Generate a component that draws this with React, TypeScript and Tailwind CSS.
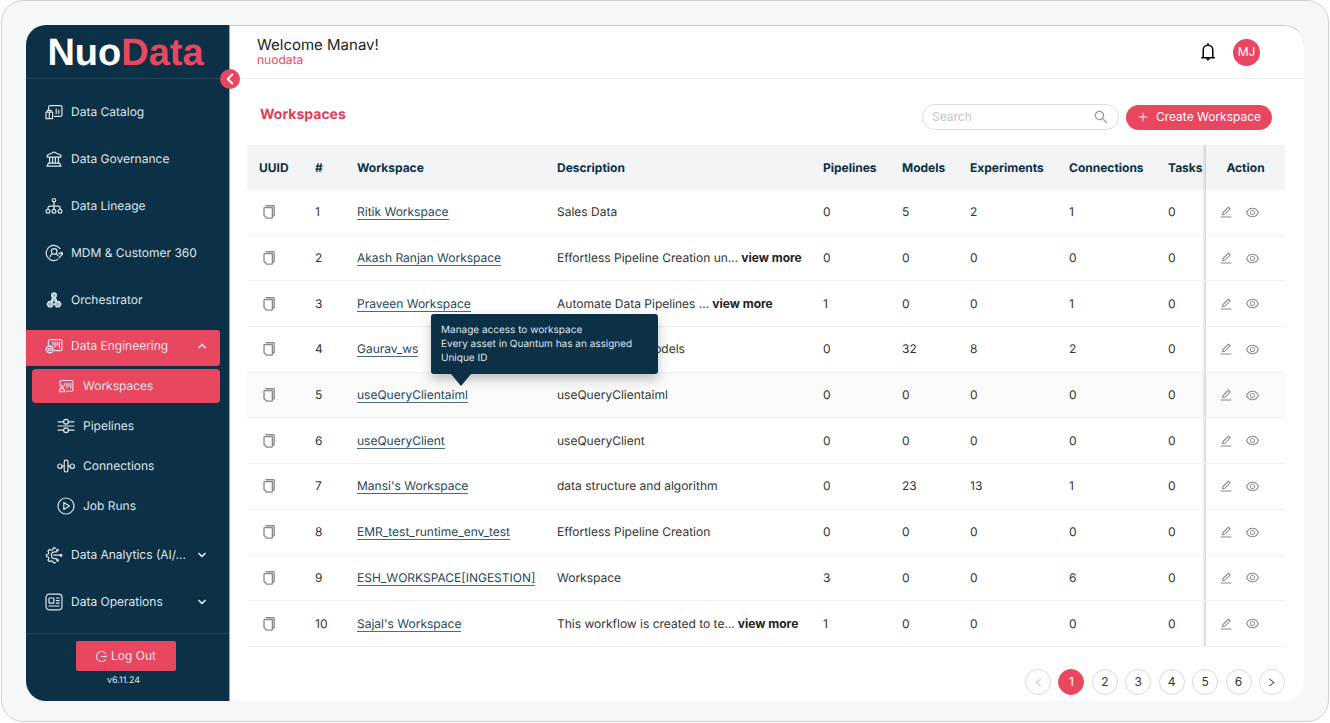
import React, { useState } from 'react';
import {
  AiOutlineEdit,
  AiOutlineEye,
  AiOutlineLeft,
  AiOutlineLogout,
  AiOutlinePlus,
  AiOutlineRight,
  AiOutlineSearch,
} from 'react-icons/ai';
import { ChevronDown, ChevronLeft, ChevronUp } from 'lucide-react';

type IconProps = { className?: string; strokeWidth?: number };

const Svg = ({
  children,
  className = 'size-[18px]',
  strokeWidth = 1.2,
}: IconProps & { children: React.ReactNode }) => (
  <svg
    viewBox="0 0 18 18"
    className={`${className} shrink-0`}
    fill="none"
    stroke="currentColor"
    strokeWidth={strokeWidth}
    strokeLinecap="round"
    strokeLinejoin="round"
    aria-hidden="true"
  >
    {children}
  </svg>
);

const CatalogIcon = () => (
  <Svg>
    <path d="M3.6 6.5V4.2a1.6 1.6 0 0 1 1.6-1.6h10.2A1.6 1.6 0 0 1 17 4.2v7.6a1.6 1.6 0 0 1-1.6 1.6H9.6" />
    <path d="M1 9.2h6.6v6.4H1zM4.3 9.2v6.4M2.4 9V7.4h3.8V9M11.2 6v4.6M13.8 7.2v3.4" />
  </Svg>
);

const GovernanceIcon = () => (
  <Svg>
    <path d="M2.2 5.2 9 2l6.800 3.200v2H2.200zM4.600 7.400v5.600M7.600 7.400v5.600M10.400 7.400v5.600M13.400 7.400v5.600" />
    <path d="M3.400 13.200h11.200l1.400 3H2z" />
  </Svg>
);

const LineageIcon = () => (
  <Svg>
    <circle cx="9" cy="3.2" r="1.7" />
    <circle cx="3" cy="14.2" r="1.9" />
    <circle cx="9" cy="14.2" r="1.9" />
    <circle cx="15" cy="14.2" r="1.9" />
    <path d="M9 5v7.2M3 12.2v-1.4A1.600 1.600 0 0 1 4.600 9.200h8.800A1.600 1.600 0 0 1 15 10.800v1.400" />
  </Svg>
);

const CustomerIcon = () => (
  <Svg>
    <path d="M15 4.600A7.600 7.600 0 1 0 12.600 15.600M17 9.200a7.600 7.600 0 0 1-3 4.600M14 9.600l3-1.200 1 2.600" />
    <circle cx="9.200" cy="7.400" r="2.800" />
    <path d="M5 13c.2-1.600 1.200-2.600 2.600-3.200M11 9.600l2.200 2" />
  </Svg>
);

const OrchestratorIcon = () => (
  <Svg>
    <g fill="currentColor" fillOpacity="0.75">
      <circle cx="9" cy="4.200" r="2.400" />
      <path d="M6.200 9.800 7.600 7h2.800l1.400 2.800zM2 13.200l1.600-2.600h3.200l1.600 2.600-1.600 2.600H3.600zM9.600 13.200l1.600-2.600h3.200l1.600 2.600-1.600 2.600h-3.200z" />
    </g>
  </Svg>
);

const EngineeringIcon = () => (
  <Svg>
    <path d="M3.400 8V4.200A1.600 1.600 0 0 1 5 2.600h10.400A1.600 1.600 0 0 1 17 4.200v7.800a1.600 1.600 0 0 1-1.600 1.600H9.400" />
    <path d="M7.800 5.200v2.200M10 5.200v4.600M12.200 5.200v3.200M14.400 5.200v5.600" />
    <circle cx="4.800" cy="12.400" r="3.200" />
    <circle cx="4.800" cy="12.400" r="1.200" />
    <path d="M4.800 8.400v.6M4.800 15.800v.6M.8 12.400h.6M8.200 12.400h.6M2 9.600l.4.4M7.200 14.800l.4.4M2 15.200l.4-.4M7.200 10l.4-.4" />
  </Svg>
);

const WorkspacesIcon = () => (
  <Svg className="size-4">
    <path d="M2.200 8V4.200a1.400 1.400 0 0 1 1.400-1.400h11.800a1.400 1.400 0 0 1 1.400 1.400v9.400a1.400 1.400 0 0 1-1.400 1.400H9.600" />
    <path d="M7.600 6v2.400M10 6v5M12.200 6v3.400M14.400 6v5.600" />
    <circle cx="4.400" cy="9.800" r="1.500" />
    <path d="M1.400 15.400c0-2.400 1.200-3.600 3-3.600s3 1.200 3 3.600z" />
  </Svg>
);

const PipelinesIcon = () => (
  <Svg>
    <path d="M1 4.800h5.600M11.400 4.800H17M1 9h16M1 13.200h5.600M11.400 13.200H17" />
    <circle cx="9" cy="4.800" r="2.400" />
    <circle cx="9" cy="13.200" r="2.400" />
  </Svg>
);

const ConnectionsIcon = () => (
  <Svg>
    <rect x="0.800" y="7" width="4.200" height="4.400" rx="2" />
    <rect x="7.200" y="3.200" width="3.800" height="11.800" rx="1.700" />
    <rect x="13.200" y="7" width="4.200" height="4.400" rx="2" />
    <path d="M5 9.200h2.200M11 9.200h2.200" />
  </Svg>
);

const JobRunsIcon = () => (
  <Svg>
    <circle cx="9" cy="9" r="8" />
    <path d="M6.800 5.600v6.800L12.400 9z" />
  </Svg>
);

const AnalyticsIcon = () => (
  <Svg>
    <path d="M10.600 2.200 8.400 1.800l-.6 1.800-1.600.6-1.700-.8L3 5l.8 1.700-.6 1.500-1.800.6v1.600l1.800.6.6 1.500L3 14.200l1.500 1.400 1.700-.8 1.600.6.6 1.600 2.200-.3" />
    <path d="M9.800 5.800a3.400 3.400 0 0 0 0 6.800M8.600 9.200h6.600M9.800 5.800h1.600l.8-1.200M9.800 12.600h1.600l.8 1.200" />
    <circle cx="16" cy="9.200" r="0.900" />
    <circle cx="12.600" cy="4" r="0.700" />
    <circle cx="12.600" cy="14.400" r="0.700" />
  </Svg>
);

const OperationsIcon = () => (
  <Svg>
    <rect x="1" y="1.200" width="16" height="15.600" rx="3.200" />
    <rect x="4" y="5" width="4.800" height="5.200" rx="0.600" />
    <path d="M11.400 5h2.800M11.400 7.600h2.800M11.400 10.200h2.800M4 13h10.200" />
  </Svg>
);

const CopyIcon = () => (
  <Svg className="size-4" strokeWidth={1.5}>
    <path d="M5.600 2h8.600a.6.6 0 0 1 .6.600v10.600h-1.600" />
    <path d="M4 4h8.200a.6.6 0 0 1 .6.600v10.600a.6.6 0 0 1-.6.600H6.200l-2.800-2.800V4.600A.6.6 0 0 1 4 4z" />
  </Svg>
);

const BellIcon = () => (
  <svg
    viewBox="0 0 14 18"
    className="h-[18px] w-[14px]"
    fill="none"
    stroke="currentColor"
    strokeWidth="1.5"
    strokeLinejoin="round"
    aria-hidden="true"
  >
    <path d="M0.200 14.800h13.600M2.200 14.800V7a4.800 4.800 0 0 1 9.600 0v7.800M7 .200v2" />
    <path d="M5.400 15.800h3.200L7 17.400z" strokeWidth="0.800" fill="currentColor" />
  </svg>
);

const topItems = [
  { label: 'Data Catalog', Icon: CatalogIcon },
  { label: 'Data Governance', Icon: GovernanceIcon },
  { label: 'Data Lineage', Icon: LineageIcon },
  { label: 'MDM & Customer 360', Icon: CustomerIcon },
  { label: 'Orchestrator', Icon: OrchestratorIcon },
];

const engineeringItems = [
  { label: 'Workspaces', Icon: WorkspacesIcon },
  { label: 'Pipelines', Icon: PipelinesIcon },
  { label: 'Connections', Icon: ConnectionsIcon },
  { label: 'Job Runs', Icon: JobRunsIcon },
];

const bottomItems = [
  { label: 'Data Analytics (AI/...', Icon: AnalyticsIcon },
  { label: 'Data Operations', Icon: OperationsIcon },
];

type Workspace = {
  name: string;
  description: string;
  more?: boolean;
  // pipelines, models, experiments, connections, tasks
  counts: number[];
};

const workspaces: Workspace[] = [
  { name: 'Ritik Workspace', description: 'Sales Data', counts: [0, 5, 2, 1, 0] },
  { name: 'Akash Ranjan Workspace', description: 'Effortless Pipeline Creation un...', more: true, counts: [0, 0, 0, 0, 0] },
  { name: 'Praveen Workspace', description: 'Automate Data Pipelines ...', more: true, counts: [1, 0, 0, 1, 0] },
  { name: 'Gaurav_ws', description: 'Workspace for models', counts: [0, 32, 8, 2, 0] },
  { name: 'useQueryClientaiml', description: 'useQueryClientaiml', counts: [0, 0, 0, 0, 0] },
  { name: 'useQueryClient', description: 'useQueryClient', counts: [0, 0, 0, 0, 0] },
  { name: "Mansi's Workspace", description: 'data structure and algorithm', counts: [0, 23, 13, 1, 0] },
  { name: 'EMR_test_runtime_env_test', description: 'Effortless Pipeline Creation', counts: [0, 0, 0, 0, 0] },
  { name: 'ESH_WORKSPACE[INGESTION]', description: 'Workspace', counts: [3, 0, 0, 6, 0] },
  { name: "Sajal's Workspace", description: 'This workflow is created to te...', more: true, counts: [1, 0, 0, 0, 0] },
];

const HOVERED_ROW = 4;

const columns = [
  { title: 'UUID', width: 'w-[56px]' },
  { title: '#', width: 'w-[42px]' },
  { title: 'Workspace', width: 'w-[200px]' },
  { title: 'Description', width: '' },
  { title: 'Pipelines', width: 'w-[79px]' },
  { title: 'Models', width: 'w-[68px]' },
  { title: 'Experiments', width: 'w-[99px]' },
  { title: 'Connections', width: 'w-[99px]' },
  { title: 'Tasks', width: 'w-[50px]' },
];

function Sidebar() {
  return (
    <aside className="flex w-[204px] shrink-0 flex-col rounded-l-[20px] border-r border-[#8fa3b0] bg-[#0c3046] text-[12px] text-[#dce6ec]">
      <div className="relative flex h-[54px] items-center justify-center border-b border-[#23485c] pt-0.5 pr-1">
        <div className="font-['Liberation_Sans',sans-serif] text-[38px] leading-none font-bold text-white">
          Nuo<span className="text-[#e8475f]">Data</span>
        </div>
        <button
          aria-label="Collapse menu"
          className="absolute -right-[11px] -bottom-[11px] z-10 flex size-5 items-center justify-center rounded-full bg-[#e8475f] text-white"
        >
          <ChevronLeft size={18} strokeWidth={2.5} />
        </button>
      </div>

      <nav className="flex flex-1 flex-col pt-[17px]">
        <ul className="flex flex-col gap-[15px]">
          {topItems.map(({ label, Icon }) => (
            <li key={label}>
              <a href="#" className="flex h-8 items-center gap-2 pl-[19px]">
                <Icon />
                {label}
              </a>
            </li>
          ))}
        </ul>

        <button className="mt-3.5 mr-[9px] flex h-9 items-center gap-2 rounded-r-[3px] bg-[#e8475f] pr-3 pb-1 pl-[19px] text-left">
          <EngineeringIcon />
          <span className="flex-1">Data Engineering</span>
          <ChevronUp size={12} strokeWidth={3.5} />
        </button>
        <ul className="mt-[3px] mb-4 flex flex-col gap-1.5 pr-[9px] pl-1.5">
          {engineeringItems.map(({ label, Icon }, i) => (
            <li key={label}>
              <a
                href="#"
                className={`flex h-[34px] items-center gap-2 rounded pl-[25px] ${i === 0 ? 'bg-[#e8475f]' : ''}`}
              >
                <span className="flex w-[18px] justify-center">
                  <Icon />
                </span>
                {label}
              </a>
            </li>
          ))}
        </ul>

        <ul className="flex flex-col gap-[15px]">
          {bottomItems.map(({ label, Icon }) => (
            <li key={label}>
              <button className="flex h-8 w-full items-center gap-2 pr-[21px] pl-[19px] text-left">
                <Icon />
                <span className="flex-1">{label}</span>
                <ChevronDown size={12} strokeWidth={3.5} />
              </button>
            </li>
          ))}
        </ul>
      </nav>

      <div className="flex h-[68px] flex-col items-center border-t border-[#23485c] pt-[7px] pr-1">
        <button className="flex h-[30px] w-[100px] items-center justify-center gap-[3px] rounded-[2px] bg-[#e8475f]">
          <AiOutlineLogout size={13} />
          Log Out
        </button>
        <span className="mt-1 pr-1 text-[9px] leading-3">v6.11.24</span>
      </div>
    </aside>
  );
}

function Tooltip() {
  return (
    <div
      role="tooltip"
      className="absolute bottom-full left-[74px] z-10 mb-[13px] w-[227px] rounded-[3px] bg-[#0c3046] px-2.5 py-[9px] text-[10px] leading-[14px] text-[#dce6ec] shadow-[0_5px_12px_rgba(0,0,0,0.25)]"
    >
      Manage access to workspace
      <br />
      Every asset in Quantum has an assigned Unique ID
      <svg viewBox="0 0 20 12" className="absolute top-full left-5 h-3 w-5" aria-hidden="true">
        <path d="M0 0h20L10 12z" fill="#0c3046" />
      </svg>
    </div>
  );
}

function WorkspaceTable() {
  return (
    <table className="h-[502px] w-full table-fixed border-separate border-spacing-0 text-left text-[12px] text-[#333]">
      <thead>
        <tr className="h-[45px] bg-[#f2f4f6] text-[#0c3046]">
          {columns.map(({ title, width }) => (
            <th key={title} className={`${width} px-3 font-bold`}>
              {title}
            </th>
          ))}
          <th className="relative w-[79px] text-center font-bold">
            <div className="absolute inset-y-0 right-full w-1 bg-linear-to-l from-[#cfd2d5] to-transparent" />
            Action
          </th>
        </tr>
      </thead>
      <tbody>
        {workspaces.map((ws, i) => (
          <tr key={ws.name} className={i === HOVERED_ROW ? 'bg-[#fafafa]' : ''}>
            <td className="border-b border-[#f0f0f0] px-3.5 text-[#888]">
              <button aria-label={`Copy UUID of ${ws.name}`} className="block">
                <CopyIcon />
              </button>
            </td>
            <td className="border-b border-[#f0f0f0] px-3">{i + 1}</td>
            <td className="border-b border-[#f0f0f0] px-3">
              <div className="relative flex">
                <a href="#" className="border-b border-[#4d6a7a] leading-[15px] whitespace-nowrap text-[#23475b]">
                  {ws.name}
                </a>
                {i === HOVERED_ROW && <Tooltip />}
              </div>
            </td>
            <td className="border-b border-[#f0f0f0] px-3 whitespace-nowrap">
              {ws.description}
              {ws.more && <button className="ml-[3px] font-bold text-[#222]">view more</button>}
            </td>
            {ws.counts.map((count, c) => (
              <td key={c} className="border-b border-[#f0f0f0] px-3">
                {count}
              </td>
            ))}
            <td className="relative border-b border-[#f0f0f0] text-[#888]">
              <div className="absolute inset-y-0 right-full w-1 bg-linear-to-l from-[#d4d4d4] to-transparent" />
              <div className="flex items-center gap-3 pl-[13px]">
                <button aria-label={`Edit ${ws.name}`}>
                  <AiOutlineEdit size={14} />
                </button>
                <button aria-label={`View ${ws.name}`}>
                  <AiOutlineEye size={15} />
                </button>
              </div>
            </td>
          </tr>
        ))}
      </tbody>
    </table>
  );
}

function Pagination() {
  const [page, setPage] = useState(1);

  return (
    <nav aria-label="Pagination" className="mt-[22px] flex w-[260px] justify-between self-end text-[12px] text-[#333]">
      <button
        aria-label="Previous page"
        disabled={page === 1}
        className="flex size-[26px] items-center justify-center rounded-full border border-[#d9d9d9] text-[#bbb]"
      >
        <AiOutlineLeft size={11} />
      </button>
      {[1, 2, 3, 4, 5, 6].map((n) => (
        <button
          key={n}
          onClick={() => setPage(n)}
          className={`size-[26px] rounded-full border ${
            n === page ? 'border-[#e8475f] bg-[#e8475f] text-white' : 'border-[#d9d9d9]'
          }`}
        >
          {n}
        </button>
      ))}
      <button
        aria-label="Next page"
        className="flex size-[26px] items-center justify-center rounded-full border border-[#d9d9d9]"
      >
        <AiOutlineRight size={11} />
      </button>
    </nav>
  );
}

export default function App() {
  const [search, setSearch] = useState('');

  return (
    <div className="mx-px rounded-[22px] border border-[#ccd3d6] bg-[#f6f7f8] px-6 pt-6 pb-5 font-['Inter',sans-serif] [text-rendering:geometricPrecision]">
      <div className="flex rounded-[20px] bg-white">
        <Sidebar />

        <main className="flex min-w-0 flex-1 flex-col rounded-r-[20px] border-t border-[#c4c6c8] pb-1.5">
          <header className="flex h-[53px] items-center justify-between border-b border-[#eef0f1] pr-11 pl-[27px]">
            <div>
              <div className="text-[15px] leading-[15px] text-[#222]">Welcome Manav!</div>
              <div className="text-[12px] leading-[15px] text-[#e8475f]">nuodata</div>
            </div>
            <div className="flex items-center gap-[18px]">
              <button aria-label="Notifications" className="text-black">
                <BellIcon />
              </button>
              <button className="size-[27px] rounded-full bg-[#e8475f] text-[12px] text-white">MJ</button>
            </div>
          </header>

          <div className="flex flex-1 flex-col pt-[25px] pr-[19px] pl-[17px]">
            <div className="mb-[15px] flex items-start justify-between px-[13px]">
              <h1 className="text-[14px] leading-[22px] font-bold text-[#e03e58]">Workspaces</h1>
              <div className="flex items-center gap-[7px]">
                <label className="flex h-[26px] w-[197px] items-center rounded-full border border-[#dcdcdc] px-[9px]">
                  <input
                    type="text"
                    aria-label="Search"
                    placeholder="Search"
                    value={search}
                    onChange={(e) => setSearch(e.target.value)}
                    className="min-w-0 flex-1 text-[12px] outline-none placeholder:text-[#c4c4c4]"
                  />
                  <AiOutlineSearch size={16} className="text-[#999]" />
                </label>
                <button className="flex h-[25px] w-[146px] items-center justify-center gap-[7px] rounded-full bg-[#e8475f] text-[12px] text-white">
                  <AiOutlinePlus size={12} />
                  Create Workspace
                </button>
              </div>
            </div>

            <WorkspaceTable />
            <Pagination />
          </div>
        </main>
      </div>
    </div>
  );
}
